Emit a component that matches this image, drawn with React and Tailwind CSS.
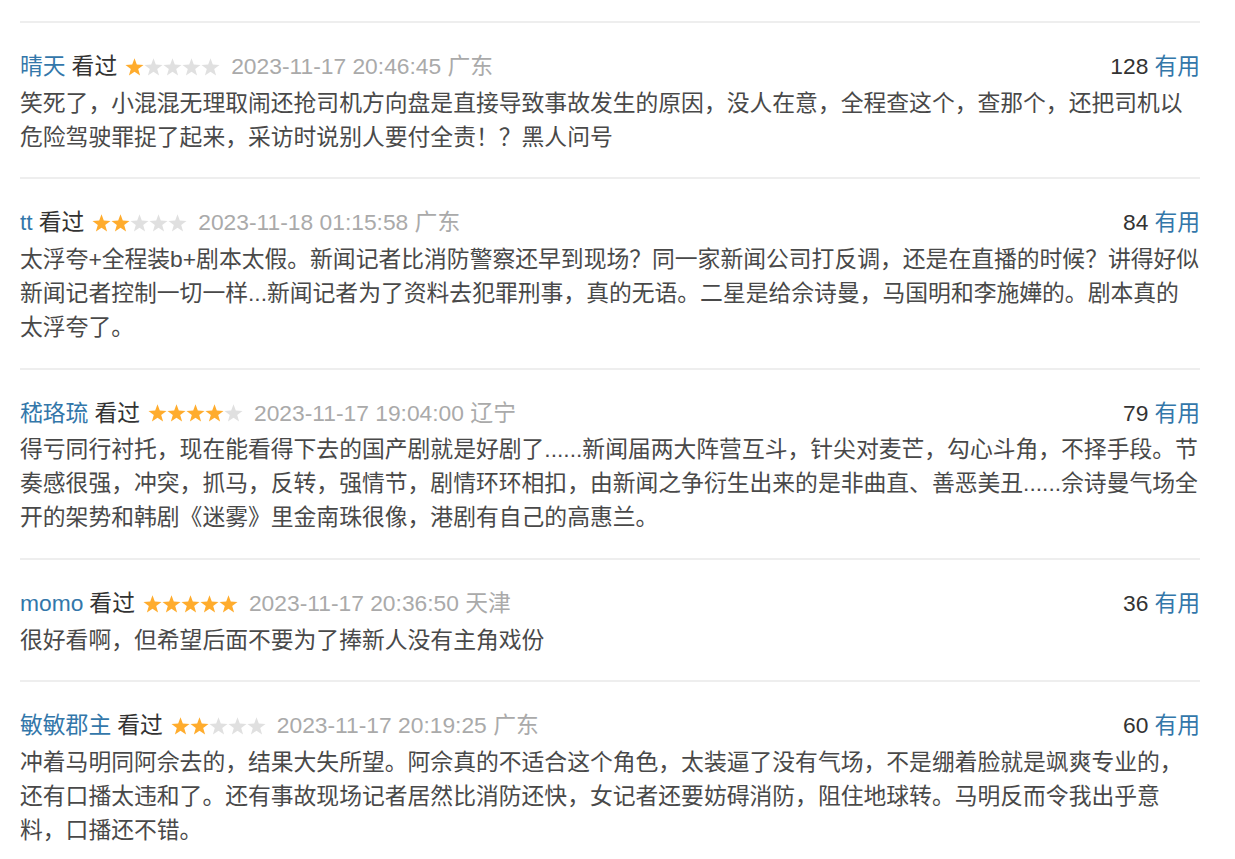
const reviews = [
    {
        name: '晴天',
        stars: 1,
        time: '2023-11-17 20:46:45',
        loc: '广东',
        votes: 128,
        text: '笑死了，小混混无理取闹还抢司机方向盘是直接导致事故发生的原因，没人在意，全程查这个，查那个，还把司机以危险驾驶罪捉了起来，采访时说别人要付全责！？黑人问号',
    },
    {
        name: 'tt',
        stars: 2,
        time: '2023-11-18 01:15:58',
        loc: '广东',
        votes: 84,
        text: '太浮夸+全程装b+剧本太假。新闻记者比消防警察还早到现场？同一家新闻公司打反调，还是在直播的时候？讲得好似新闻记者控制一切一样...新闻记者为了资料去犯罪刑事，真的无语。二星是给佘诗曼，马国明和李施嬅的。剧本真的太浮夸了。',
    },
    {
        name: '嵇珞琉',
        stars: 4,
        time: '2023-11-17 19:04:00',
        loc: '辽宁',
        votes: 79,
        text: '得亏同行衬托，现在能看得下去的国产剧就是好剧了......新闻届两大阵营互斗，针尖对麦芒，勾心斗角，不择手段。节奏感很强，冲突，抓马，反转，强情节，剧情环环相扣，由新闻之争衍生出来的是非曲直、善恶美丑......佘诗曼气场全开的架势和韩剧《迷雾》里金南珠很像，港剧有自己的高惠兰。',
    },
    {
        name: 'momo',
        stars: 5,
        time: '2023-11-17 20:36:50',
        loc: '天津',
        votes: 36,
        text: '很好看啊，但希望后面不要为了捧新人没有主角戏份',
    },
    {
        name: '敏敏郡主',
        stars: 2,
        time: '2023-11-17 20:19:25',
        loc: '广东',
        votes: 60,
        text: '冲着马明同阿佘去的，结果大失所望。阿佘真的不适合这个角色，太装逼了没有气场，不是绷着脸就是飒爽专业的，还有口播太违和了。还有事故现场记者居然比消防还快，女记者还要妨碍消防，阻住地球转。马明反而令我出乎意料，口播还不错。',
    },
]

// one star, fills a 19x18 cell
const STAR = '9.5,0.3 11.8,6.6 18.5,6.9 13.2,11 15.1,17.5 9.5,13.7 3.9,17.5 5.8,11 0.5,6.9 7.2,6.6'

function Stars({ n }) {
    return (
        <svg width="95" height="18" viewBox="0 0 95 18" className="ml-[8px] mr-[11px] shrink-0">
            {[0, 1, 2, 3, 4].map(i => (
                <polygon key={i} points={STAR} transform={`translate(${i * 19} 0)`} fill={i < n ? '#ffac2d' : '#e0e0e0'} />
            ))}
        </svg>
    )
}

export default function App() {
    return (
        <div className="bg-white min-h-screen px-[20px] pt-[21px] text-[22.8px] leading-[33.8px]" style={{ fontFamily: '"Liberation Sans", "Noto Sans CJK SC", sans-serif' }}>
            <div className="w-[1180px]">
                {reviews.map(r => (
                    <div key={r.name} className="border-t-2 border-[#eeeeee] pt-[27px] pb-[23px]">
                        <div className="flex items-center justify-between">
                            <div className="flex items-center whitespace-nowrap">
                                <span className="text-[#3377aa]">{r.name}</span>
                                <span className="text-[#333333] ml-[6px]">看过</span>
                                <Stars n={r.stars} />
                                <span className="text-[#aaaaaa]">{r.time} {r.loc}</span>
                            </div>
                            <div className="whitespace-nowrap">
                                <span className="text-[#333333]">{r.votes}</span>
                                <span className="text-[#3377aa] ml-[6px]">有用</span>
                            </div>
                        </div>
                        <p className="text-[#494949] mt-[3px]">{r.text}</p>
                    </div>
                ))}
            </div>
        </div>
    )
}
